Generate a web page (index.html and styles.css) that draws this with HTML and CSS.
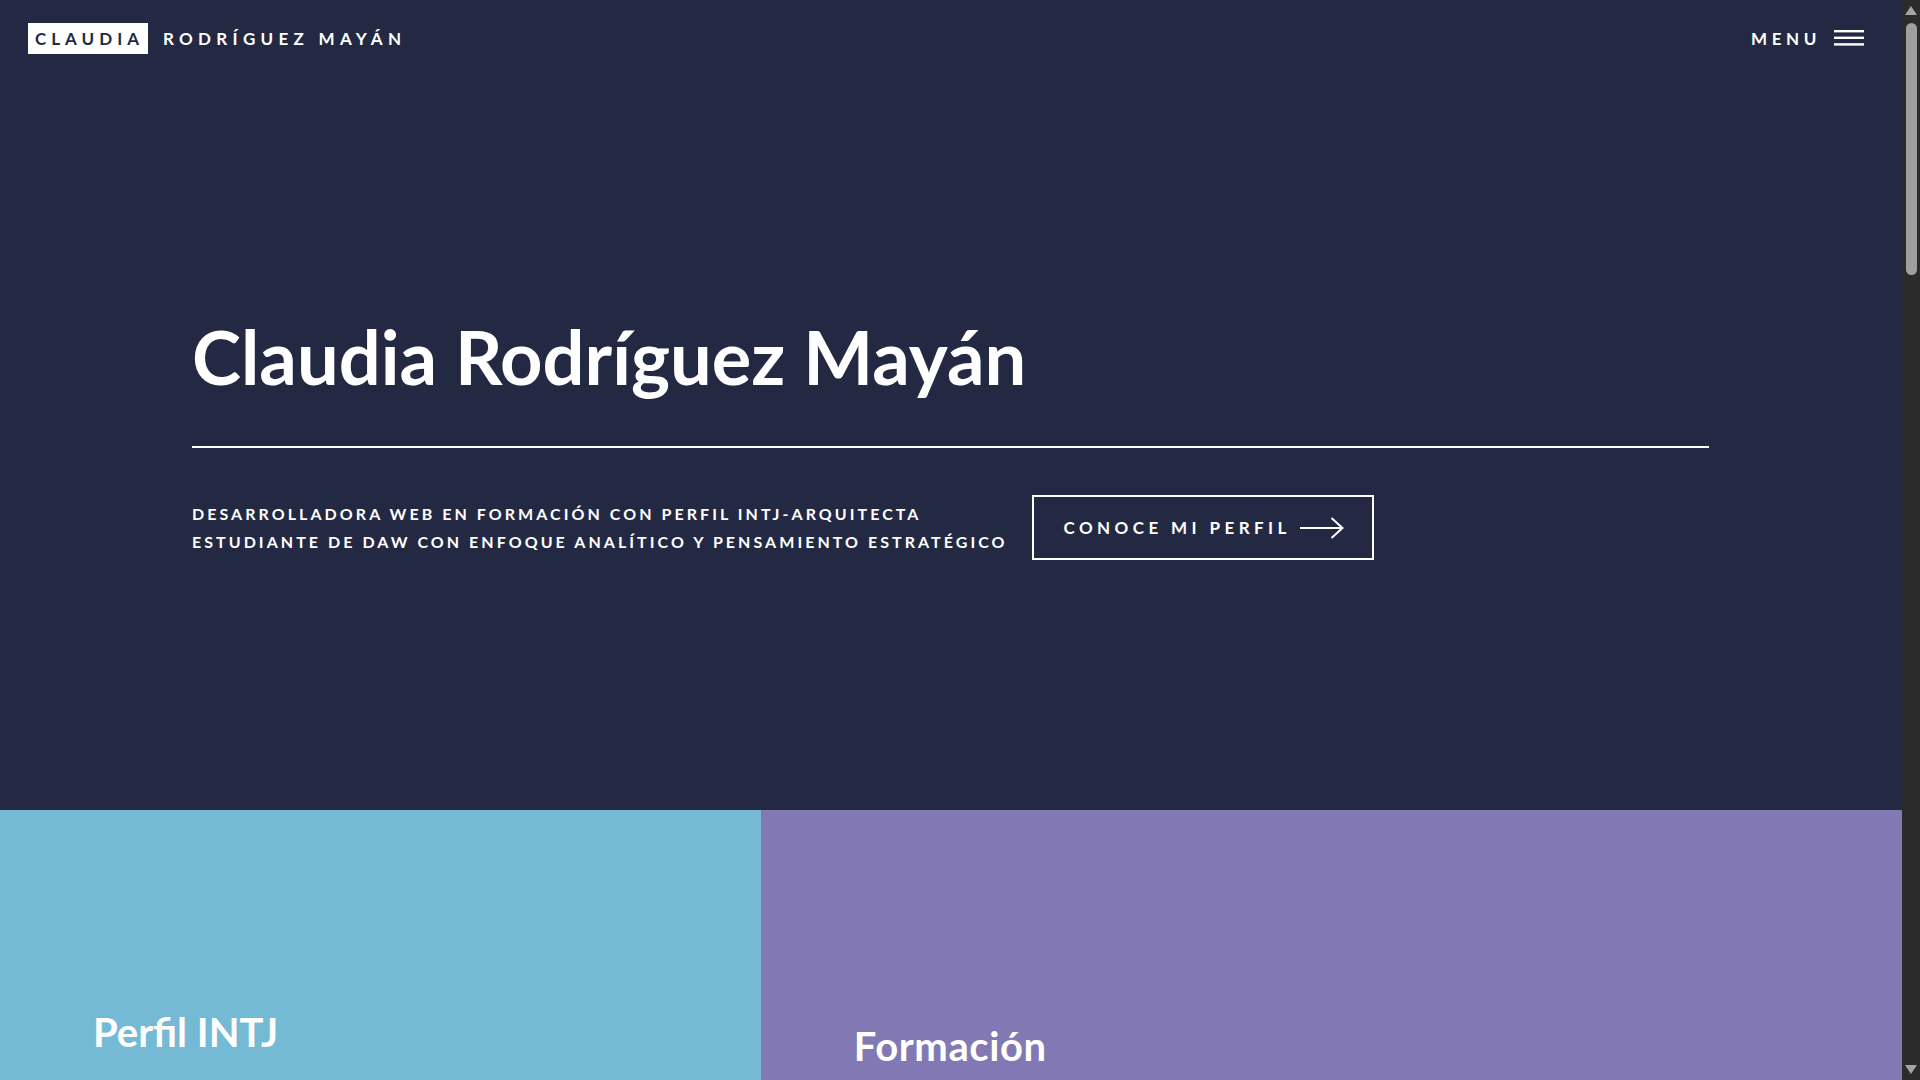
FILE: index.html
```html
<!DOCTYPE html>
<html lang="es">
<head>
<meta charset="utf-8">
<title>Claudia Rodríguez Mayán</title>
<link rel="stylesheet" href="styles.css">
</head>
<body>
<div class="viewport">
<div class="page">
<header class="site-header">
  <a class="logo" href="#">
    <strong class="logo-first">Claudia</strong>
    <span class="logo-last">Rodríguez Mayán</span>
  </a>
  <a class="menu-toggle" href="#menu">
    <span class="menu-label">Menu</span>
    <svg class="menu-icon" width="30" height="16" viewBox="0 0 30 16" aria-hidden="true">
      <rect x="0" y="0" width="30" height="2.4" fill="#fff"/>
      <rect x="0" y="6.6" width="30" height="2.4" fill="#fff"/>
      <rect x="0" y="13.2" width="30" height="2.4" fill="#fff"/>
    </svg>
  </a>
</header>

<section class="hero">
  <div class="hero-inner">
    <h1 class="hero-title">Claudia Rodríguez Mayán</h1>
    <div class="hero-row">
      <p class="hero-sub">Desarrolladora web en formación con perfil INTJ-Arquitecta<br>Estudiante de DAW con enfoque analítico y pensamiento estratégico</p>
      <a class="btn-next" href="#perfil">
        <span class="btn-label">Conoce mi perfil</span>
        <svg class="btn-arrow" width="44" height="22" viewBox="0 0 44 22" aria-hidden="true">
          <path d="M0 11 H42.5" stroke="#fff" stroke-width="2" fill="none"/>
          <path d="M31.5 1 L42.5 11 L31.5 21" stroke="#fff" stroke-width="2" fill="none"/>
        </svg>
      </a>
    </div>
  </div>
</section>

<section class="tiles" id="perfil">
  <article class="tile tile-narrow tile-blue">
    <h2 class="tile-title">Perfil INTJ</h2>
    <p class="tile-text">Pensamiento estratégico, visión a largo plazo y resolución lógica de problemas.</p>
  </article>
  <article class="tile tile-wide tile-purple tile-low">
    <h2 class="tile-title tile-title-wide">Formación</h2>
    <p class="tile-text">Ciclo Formativo de Grado Superior en Desarrollo de Aplicaciones Web.</p>
  </article>
  <article class="tile tile-wide tile-coral">
    <h2 class="tile-title">Proyectos</h2>
    <p class="tile-text">Aplicaciones web, maquetación y pequeños proyectos personales.</p>
  </article>
  <article class="tile tile-narrow tile-sand">
    <h2 class="tile-title">Habilidades</h2>
    <p class="tile-text">HTML, CSS, JavaScript, PHP, Java y bases de datos.</p>
  </article>
  <article class="tile tile-narrow tile-sky">
    <h2 class="tile-title">Experiencia</h2>
    <p class="tile-text">Prácticas y trabajo en equipo en entornos reales.</p>
  </article>
  <article class="tile tile-wide tile-green">
    <h2 class="tile-title">Contacto</h2>
    <p class="tile-text">Hablemos de tu próximo proyecto.</p>
  </article>
</section>

<section class="about">
  <div class="about-inner">
    <h2 class="section-title">Sobre mí</h2>
    <p class="section-text">Soy una desarrolladora web en formación con una forma de trabajar analítica y metódica. Me gusta entender los sistemas en profundidad, planificar antes de construir y buscar siempre la solución más eficiente.</p>
  </div>
</section>

<section class="contact">
  <div class="contact-inner">
    <h2 class="section-title">Contacto</h2>
    <p class="section-text">Correo: claudia@example.com</p>
  </div>
</section>

<footer class="site-footer">
  <p class="footer-text">© Claudia Rodríguez Mayán</p>
</footer>
</div>
<div class="scrollbar" aria-hidden="true">
  <span class="sb-up"></span>
  <span class="sb-thumb"></span>
  <span class="sb-down"></span>
</div>
</div>
</body>
</html>
```
FILE: styles.css
```css
* {
  box-sizing: border-box;
}

html, body {
  margin: 0;
  padding: 0;
  height: 100%;
  overflow: hidden;
}

body {
  background: #242943;
  color: #fff;
  font-family: "Lato", "Liberation Sans", sans-serif;
}

/* Window: scrolling page + its scrollbar */
.viewport {
  display: flex;
  height: 100vh;
}

.page {
  flex: 1;
  min-width: 0;
  height: 100vh;
  overflow-y: scroll;
}

.scrollbar {
  flex: none;
  width: 18px;
  height: 100vh;
  background: #2b2b2b;
  display: flex;
  flex-direction: column;
  align-items: center;
}

.sb-up {
  margin-top: 6px;
  width: 0;
  height: 0;
  border-left: 6.5px solid transparent;
  border-right: 6.5px solid transparent;
  border-bottom: 9px solid #a3a3a3;
}

.sb-thumb {
  margin-top: 8px;
  width: 11px;
  height: 252px;
  border-radius: 6px;
  background: #9f9f9f;
}

.sb-down {
  margin-top: auto;
  margin-bottom: 6px;
  width: 0;
  height: 0;
  border-left: 6.5px solid transparent;
  border-right: 6.5px solid transparent;
  border-top: 9px solid #a3a3a3;
}

/* Header */
.site-header {
  height: 77px;
  display: flex;
  align-items: center;
  justify-content: space-between;
  padding: 0 38px 0 28px;
  background: #242943;
}

.logo {
  display: flex;
  align-items: center;
  gap: 15px;
  color: #fff;
  text-decoration: none;
  font-size: 17px;
  font-weight: 700;
  line-height: 31px;
  letter-spacing: 5px;
  text-transform: uppercase;
}

.logo-first {
  background: #fff;
  color: #242943;
  padding: 0 4px 0 7px;
  font-weight: 700;
}

.logo-last {
  letter-spacing: 5.3px;
}

.menu-toggle {
  display: flex;
  align-items: center;
  gap: 13px;
  color: #fff;
  text-decoration: none;
  font-size: 17px;
  font-weight: 700;
  letter-spacing: 4.6px;
  text-transform: uppercase;
}

.menu-icon {
  display: block;
  margin-top: -1px;
}

/* Hero */
.hero {
  height: 733px;
  padding-top: 240px;
}

.hero-inner {
  width: 1517px;
  margin-left: 192px;
}

.hero-title {
  margin: 0;
  font-size: 74px;
  line-height: 80px;
  font-weight: 700;
  padding-bottom: 49px;
  border-bottom: 2px solid #fff;
}

.hero-row {
  display: flex;
  align-items: center;
  gap: 24px;
  margin-top: 47px;
}

.hero-sub {
  margin: 0;
  font-size: 16px;
  line-height: 28px;
  font-weight: 700;
  letter-spacing: 3.05px;
  text-transform: uppercase;
}

.btn-next {
  display: flex;
  align-items: center;
  height: 65px;
  padding: 0 28px 0 30px;
  border: 2px solid #fff;
  color: #fff;
  text-decoration: none;
  font-size: 17px;
  font-weight: 700;
  letter-spacing: 4.4px;
  text-transform: uppercase;
  white-space: nowrap;
}

.btn-arrow {
  display: block;
  margin-left: 9px;
}

/* Tiles */
.tiles {
  display: flex;
  flex-wrap: wrap;
}

.tile {
  height: 453px;
  padding: 198px 60px 0 93px;
}

.tile-low {
  padding-top: 212px;
}

.tile-narrow {
  width: 40%;
}

.tile-wide {
  width: 60%;
}

.tile-blue { background: #74bad5; }
.tile-purple { background: #8279b4; }
.tile-coral { background: #d0837c; }
.tile-sand { background: #cba682; }
.tile-sky { background: #7f99d0; }
.tile-green { background: #7cb39a; }

.tile-title {
  margin: 0;
  font-size: 40px;
  line-height: 1.2;
  font-weight: 700;
}

.tile-title-wide {
  letter-spacing: 0.6px;
}

.tile-text {
  margin: 20px 0 0;
  font-size: 18px;
  line-height: 1.6;
  max-width: 520px;
  visibility: hidden;
}

/* Lower sections */
.about {
  background: #2a2f4a;
  min-height: 900px;
  padding: 120px 0;
}

.about-inner,
.contact-inner {
  width: 1517px;
  margin-left: 192px;
}

.section-title {
  margin: 0 0 30px;
  font-size: 39px;
  font-weight: 700;
}

.section-text {
  margin: 0;
  font-size: 20px;
  line-height: 1.7;
  max-width: 900px;
  color: #e6e8f0;
}

.contact {
  background: #353a56;
  min-height: 900px;
  padding: 120px 0;
}

.site-footer {
  background: #242943;
  min-height: 500px;
  padding: 80px 192px;
}

.footer-text {
  margin: 0;
  font-size: 15px;
  letter-spacing: 2px;
  color: #b9bccb;
}
```
